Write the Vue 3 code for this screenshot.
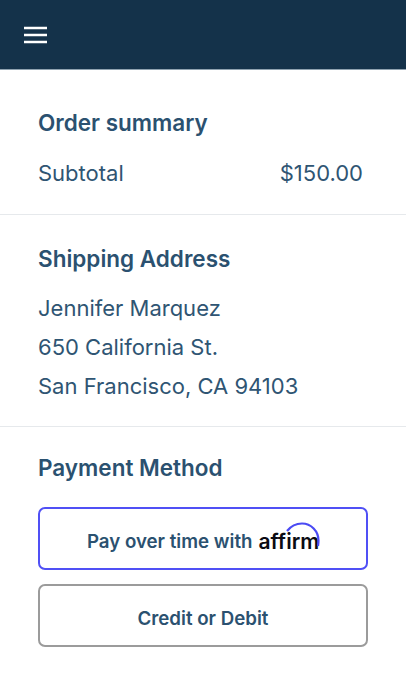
<template>
  <div class="page">
    <header class="bar">
      <svg class="menu" width="24" height="18" viewBox="0 0 24 18" aria-hidden="true">
        <path d="M0 2h23M0 9h23M0 16h23" stroke="#fff" stroke-width="2.4" fill="none" />
      </svg>
    </header>
    <section class="sec first">
      <h2>Order summary</h2>
      <div class="row"><span>Subtotal</span><span>$150.00</span></div>
    </section>
    <section class="sec second">
      <h2>Shipping Address</h2>
      <p>Jennifer Marquez</p>
      <p>650 California St.</p>
      <p>San Francisco, CA 94103</p>
    </section>
    <section class="sec third">
      <h2>Payment Method</h2>
      <button class="btn active">
        <span>Pay over time with</span>
        <span class="logo">affirm<svg class="arc" width="36" height="26" viewBox="0 0 36 26" aria-hidden="true"><path d="M2 9C6 4 11 1.500 17 1.500C26 1.500 33.500 9 33.500 18.500C33.500 20.500 33.300 22 33 24" stroke="#4a4af4" stroke-width="2.2" fill="none" /></svg></span>
      </button>
      <button class="btn">Credit or Debit</button>
    </section>
  </div>
</template>

<script setup>
</script>

<style>
html, body { margin: 0; background: #fff; }
</style>

<style scoped>
.page {
  width: 406px;
  height: 680px;
  overflow: hidden;
  background: #fff;
  color: #2f5573;
  font-family: Inter, "Open Sans", sans-serif;
}
.bar {
  height: 69px;
  background: #14324a;
  border-bottom: 1px solid #8fa2b0;
  display: flex;
  align-items: center;
  padding-left: 24px;
}
.menu { display: block; }
.sec { padding: 0 38px; border-bottom: 1px solid #e6e9ec; }
.first { height: 145px; box-sizing: border-box; }
.second { height: 212px; box-sizing: border-box; }
.third { border: 0; }
h2 {
  margin: 0;
  font-size: 22.5px;
  line-height: 28px;
  font-weight: 600;
  color: #2b5170;
}
.first h2 { padding-top: 39px; }
.second h2 { padding-top: 30px; }
.third h2 { padding-top: 27px; }
.row {
  display: flex;
  justify-content: space-between;
  margin: 21px 5px 0 0;
  font-size: 22px;
  line-height: 30px;
}
p {
  margin: 0;
  font-size: 22px;
  line-height: 39px;
}
.second h2 + p { margin-top: 16px; }
.btn {
  display: flex;
  align-items: center;
  justify-content: center;
  width: 330px;
  height: 63px;
  margin: 0;
  padding: 6px 0 0;
  background: #fff;
  border: 2.5px solid #9b9b9b;
  border-radius: 7px;
  color: #2b5170;
  font: 600 18.7px Inter, "Open Sans", sans-serif;
}
.active {
  margin-top: 25px;
  margin-bottom: 14px;
  border-color: #5050f5;
  gap: 6px;
}
.logo {
  position: relative;
  color: #0b0b12;
  font: 600 21px Inter, sans-serif;
}
.arc { position: absolute; left: 27px; top: -7px; }
</style>
